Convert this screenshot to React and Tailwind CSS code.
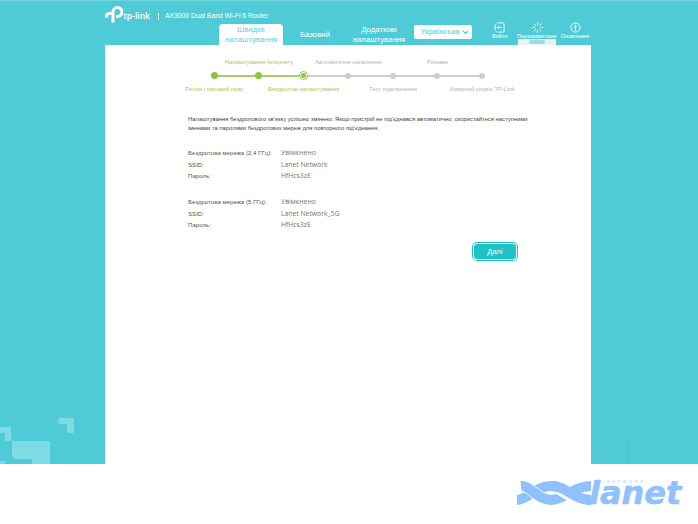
const font = { fontFamily: '"Liberation Sans", Arial, sans-serif' }
const openSans = { fontFamily: '"Open Sans", sans-serif' }

const topLabels = [
  { text: 'Налаштування Інтернету', active: true, col: 'col-start-2' },
  { text: 'Автоматичне оновлення', col: 'col-start-4' },
  { text: 'Резюме', col: 'col-start-6' },
]

const bottomLabels = [
  { text: 'Регіон і часовий пояс', active: true, col: 'col-start-1' },
  { text: 'Бездротові налаштування', active: true, col: 'col-start-3' },
  { text: 'Тест підключення', col: 'col-start-5' },
  { text: 'Хмарний сервіс TP-Link', col: 'col-start-7' },
]

const networks = [
  { label: 'Бездротова мережа (2,4 ГГц):', ssid: 'Lanet Network' },
  { label: 'Бездротова мережа (5 ГГц):', ssid: 'Lanet Network_5G' },
]

const StepLabel = ({ item }) => (
  <div className={`${item.col} flex justify-center whitespace-nowrap text-[5.9px] leading-[8px] ${item.active ? 'text-[#9ccb5a]' : 'text-[#b5b5b5]'}`}>
    {item.text}
  </div>
)

const Dot = ({ on }) => (
  <span className="relative flex h-[9px] w-[9px] items-center justify-center">
    <span className={on ? 'h-[7px] w-[7px] rounded-full bg-[#8cc63f]' : 'h-[6px] w-[6px] rounded-full bg-[#cdcdcd]'} />
  </span>
)

const Stepper = () => (
  <div className="ml-[87px] w-[313px] pt-[13px]">
    <div className="grid grid-cols-[repeat(7,44.67px)]">
      {topLabels.map((item) => <StepLabel key={item.text} item={item} />)}
    </div>
    <div className="relative ml-[17.5px] mt-[5px] flex h-[9px] w-[277px] items-center justify-between">
      <span className="absolute left-[4px] top-[3.5px] h-[2px] w-[89px] bg-[#a5d163]" />
      <span className="absolute left-[93px] top-[3.5px] h-[2px] w-[179px] bg-[#cfcfcf]" />
      <Dot on />
      <Dot on />
      <span className="relative flex h-[9px] w-[9px] items-center justify-center rounded-full border border-[#8cc63f] bg-white">
        <span className="h-[5px] w-[5px] rounded-full bg-[#8cc63f]" />
      </span>
      <Dot />
      <Dot />
      <Dot />
      <Dot />
    </div>
    <div className="mt-[5px] grid grid-cols-[repeat(7,44.67px)]">
      {bottomLabels.map((item) => <StepLabel key={item.text} item={item} />)}
    </div>
  </div>
)

const NetworkInfo = ({ label, ssid }) => (
  <div className="grid grid-cols-[93px_1fr] gap-y-[3.5px] text-[6.1px] leading-[8px] text-[#555]">
    <div>{label}</div>
    <div className="text-[6.8px] text-[#777]" style={openSans}>Увімкнено</div>
    <div>SSID:</div>
    <div className="text-[6.8px] text-[#777]" style={openSans}>{ssid}</div>
    <div>Пароль:</div>
    <div className="text-[6.8px] text-[#777]" style={openSans}>HfHcs3zE</div>
  </div>
)

const HeaderAction = ({ label, children }) => (
  <div className="flex flex-col items-center text-[5.5px] leading-[6px] text-white">
    <svg width="11" height="11" viewBox="0 0 12 12" fill="none" stroke="white" strokeWidth="1">
      {children}
    </svg>
    <span className="whitespace-nowrap">{label}</span>
  </div>
)

const Header = () => (
  <div className="relative h-[45px] border-t border-[#6fd6de]">
    <div className="flex items-center pl-[105px] pt-[5px]">
      <svg width="18" height="17" viewBox="0 0 18 17" fill="none" stroke="white" strokeWidth="3">
        <path d="M8 16.5V6a4.5 4.5 0 1 1 4.5 4.5H11" />
        <path d="M1.6 11.5V10a2.6 2.6 0 0 1 2.6-2.6H7" />
      </svg>
      <span className="ml-[0.5px] mt-[3px] text-[8.5px] font-semibold text-white" style={openSans}>tp-link</span>
      <span className="ml-[8px] mt-[3px] h-[7px] w-px bg-white" />
      <span className="ml-[6px] mt-[3px] text-[6.8px] text-white">AX3000 Dual Band Wi-Fi 6 Router</span>
    </div>
    <div className="absolute bottom-0 left-[219px] flex items-end">
      <div className="flex h-[21px] w-[64px] items-center justify-center rounded-t-[4px] bg-white text-center text-[7.8px] leading-[9.5px] text-[#5fd0da]">
        Швидке<br />налаштування
      </div>
      <div className="flex h-[21px] w-[64px] items-center justify-center text-[7.8px] text-white">Базовий</div>
      <div className="flex h-[21px] w-[64px] items-center justify-center text-center text-[7.8px] leading-[9.5px] text-white">
        Додаткові<br />налаштування
      </div>
      <div className="mb-[6px] ml-[3px] flex h-[14px] w-[58px] items-center justify-between rounded-[2px] bg-white pl-[7px] pr-[3px] text-[7.2px] font-bold text-[#7ad8e0]">
        Українська
        <svg width="7" height="5" viewBox="0 0 7 5" fill="none" stroke="#4acbd6" strokeWidth="1.2">
          <path d="M1 1l2.5 2.5L6 1" />
        </svg>
      </div>
    </div>
    <div className="absolute left-[492px] top-[21px]">
      <HeaderAction label="Вийти">
        <path d="M4.5 1H10a1 1 0 0 1 1 1v8a1 1 0 0 1-1 1H4.5" />
        <path d="M2 1.2h1M2 10.8h1M1.2 2.5v7" />
        <path d="M8.5 6H3.5M5.3 4.2 3.5 6l1.8 1.8" />
      </HeaderAction>
    </div>
    <div className="absolute left-[518px] top-[21px] flex w-[38px] justify-center">
      <HeaderAction label="Перезавантаже">
        <path d="M6 0v3.5M6 8.5V12M0 6h3.5M8.5 6H12M1.8 1.8l2.5 2.5M7.7 7.7l2.5 2.5M10.2 1.8 7.7 4.3M4.3 7.7l-2.5 2.5" />
      </HeaderAction>
    </div>
    <div className="absolute bottom-0 left-[518px] flex h-[6px] w-[38px] items-center justify-center bg-[#eef1f2]">
      <span className="h-[4px] w-[16px] rounded-full bg-[#9adbe6]" />
    </div>
    <div className="absolute left-[561px] top-[21px] flex w-[28px] justify-center">
      <HeaderAction label="Оновлення">
        <circle cx="6" cy="6" r="5" />
        <path d="M6 9.5V3.5M4 5.5l2-2 2 2" />
      </HeaderAction>
    </div>
  </div>
)

const Decor = () => (
  <>
    <div className="absolute left-0 top-[427px] h-[6px] w-[11px] rounded-tr-[1px] bg-[#7fdbe3]" />
    <div className="absolute left-[5px] top-[433px] h-[8px] w-[6px] rounded-b-[1px] bg-[#7fdbe3]" />
    <div className="absolute left-[12px] top-[441px] h-[18px] w-[38px] rounded-bl-[4px] bg-[#7fdbe3]" />
    <div className="absolute left-[32px] top-[459px] h-[5px] w-[18px] bg-[#7fdbe3]" />
    <div className="absolute left-0 top-[461px] h-[3px] w-[5px] bg-[#7fdbe3]" />
    <div className="absolute left-[59px] top-[418px] h-[6px] w-[15px] rounded-tr-[1px] bg-[#7fdbe3]" />
    <div className="absolute left-[67px] top-[424px] h-[9px] w-[7px] rounded-b-[1px] bg-[#7fdbe3]" />
    <div className="absolute left-[57px] top-[419px] h-[6px] w-px bg-[#6dd5de]" />
    <div className="absolute left-[627px] top-[440px] h-[24px] w-px bg-[#48c6d1]" />
  </>
)

const LanetLogo = () => (
  <div className="relative ml-[515px] flex h-[24px] w-[168px]">
    <svg width="76" height="24" viewBox="0 0 76 24" fill="none" strokeWidth="10">
      <path d="M2 19C13 19 20 5 36 5C52 5 58 19 76 19" stroke="#8fc1ff" />
      <path d="M6 5C15 4 22 19 36 19C50 19 58 5 76 5" stroke="white" strokeWidth="11.5" />
      <path d="M6 5C15 4 22 19 36 19C50 19 58 5 76 5" stroke="#8fc1ff" />
      <path d="M43 7.5C50 10 54 16 62 17.5" stroke="white" strokeWidth="11.5" />
      <path d="M36 5C52 5 58 19 76 19" stroke="#8fc1ff" />
    </svg>
    <span
      className="absolute left-[74px] top-[3.4px] text-[32px] font-bold italic leading-[19px] text-[#8fc1ff] [-webkit-text-stroke:0.6px_#8fc1ff]"
      style={{ fontFamily: '"DejaVu Sans", sans-serif' }}
    >
      lanet
    </span>
    <span className="absolute left-[92px] top-[-1px] text-[3.5px] font-bold leading-[4px] tracking-[3px] text-[#b9d8ff]">NETWORK</span>
  </div>
)

export default function App() {
  return (
    <div className="h-[524px] w-[698px] overflow-hidden bg-white" style={font}>
      <div className="relative h-[464px] bg-[#4ecbd6]">
        <Decor />
        <Header />
        <main className="relative ml-[105px] h-[419px] w-[486px] bg-white">
          <Stepper />
          <div className="ml-[83px] mt-[22px] w-[345px] text-[5.85px] leading-[9px] text-[#444]">
            Налаштування бездротового зв'язку успішно змінено. Якщо пристрій не під'єднався автоматично, скористайтеся наступними
            <br />
            іменами та паролями бездротових мереж для повторного під'єднання.
          </div>
          <div className="ml-[83px] mt-[16px] flex flex-col gap-[18px]">
            {networks.map((n) => <NetworkInfo key={n.ssid} {...n} />)}
          </div>
          <div className="mr-[75px] mt-[15px] flex justify-end">
            <button className="h-[15px] w-[42px] rounded-[3px] bg-[#20c1c6] text-[7.5px] text-white ring-1 ring-[#20c1c6] ring-offset-1">
              Далі
            </button>
          </div>
        </main>
      </div>
      <div className="pt-[17px]">
        <LanetLogo />
      </div>
    </div>
  )
}
